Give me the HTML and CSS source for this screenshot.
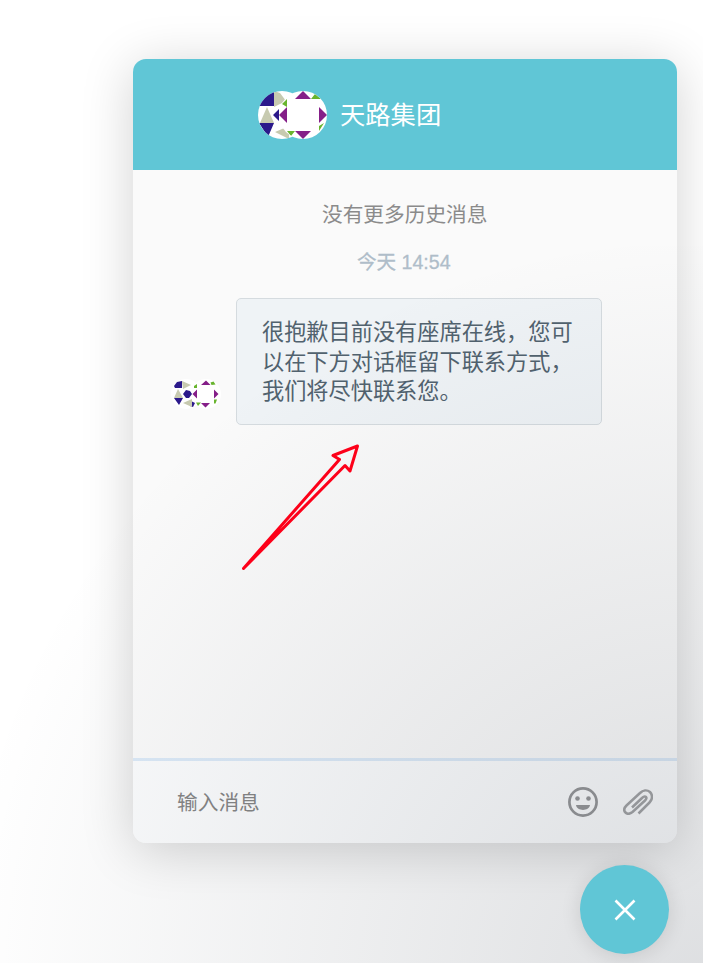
FILE: index.html
```html
<!DOCTYPE html>
<html lang="zh-CN">
<head>
<meta charset="utf-8">
<title>天路集团</title>
<link rel="stylesheet" href="styles.css">
</head>
<body>
<svg class="defs" width="0" height="0" aria-hidden="true">
  <defs>
    <clipPath id="round"><circle cx="24" cy="24" r="24"/></clipPath>
    <g id="face-a" clip-path="url(#round)">
      <path fill="#fff" d="M0 0h48v48H0z"/>
      <path fill="#2b198b" d="M16 0v15L0 15V8zM1 32h15l-6 14zM15 24l6-6v12z"/>
      <path fill="#c7cab0" d="M16 0l6 2 6 8-12 6zM9 16L2 32h14zM17 41l14-6v13z"/>
    </g>
    <g id="face-b" clip-path="url(#round)">
      <path fill="#fff" d="M0 0h48v48H0z"/>
      <path fill="#851f88" d="M16 8l8-8 8 8zM16 40h16l-8 8zM8 16v16l-8-8zM40 16v16l8-8z"/>
      <path fill="#68b42e" d="M32 8l4-5 6 5zM40 40v-5l5-3zM8 16V8L3 13zM8 40h8l-4 5z"/>
    </g>
  </defs>
</svg>
<main class="chat">
  <header class="chat-header">
    <svg class="team" viewBox="0 0 69 48"><use href="#face-a"/><use href="#face-b" x="21"/></svg>
    <h1 class="title">天路集团</h1>
  </header>
  <section class="messages">
    <p class="history">没有更多历史消息</p>
    <p class="date">今天 14:54</p>
    <div class="row">
      <svg class="sender" viewBox="0 0 50 30">
        <circle cx="15" cy="15" r="15" fill="#fff"/>
        <circle cx="35" cy="15" r="15" fill="#fff"/>
        <path fill="#2b198b" d="M3 7l3-4 5-1v7H4zM3 19h9l-4 7zM15 11l4 1 2 3-3 4h-3l-3-4zM20 22l4 2-2 4-3-1z"/>
        <path fill="#c7cab0" d="M11 2l9 4-8 4zM7 10l5 9H3zM12 24l9-4v8z"/>
        <path fill="#851f88" d="M30 6l5-4.500L39.500 6zM30 24h9l-4.500 4.500zM26 10.500v9L21.500 15zM43 10.500v9l4.500-4.500z"/>
        <path fill="#68b42e" d="M39.500 3.500l3-1 2 3-4 .5zM43 20.500h3l-1.500 4H43zM23 7l3-2v4h-3zM25 23.500h5L27 27z"/>
      </svg>
      <div class="bubble">很抱歉目前没有座席在线，您可以在下方对话框留下联系方式，我们将尽快联系您。</div>
    </div>
  </section>
  <footer class="composer">
    <span class="placeholder">输入消息</span>
    <svg class="emoji" viewBox="0 0 30 30"><circle cx="15" cy="15" r="13.6"/><circle class="solid" cx="9.5" cy="11.5" r="2.3"/><circle class="solid" cx="20.5" cy="11.5" r="2.3"/><path class="solid" d="M8 18h14c-1 6.500-13 6.500-14 0z"/></svg>
    <svg class="clip" viewBox="0 0 30 26"><path d="M15.500 24.500L26.500 13.500C30 10 29.500 5.500 27 3c-3-2.500-7-2-10 1L3.500 16.500C.5 19.500 1 22 2.500 23.500c2 2 4.500 1.500 7-.5L22 11.500c2-2 1.500-3 1-3.500-1-1-2-1-4 1L9 18.500"/></svg>
  </footer>
</main>
<button class="launcher" aria-label="关闭"><svg viewBox="0 0 22 22"><path d="M1.500 1.500l19 19M20.500 1.500l-19 19"/></svg></button>
<div class="shade"></div>
<svg class="arrow" viewBox="0 0 140 145"><path d="M13.500 133.500L109.500 24.500 103 20.500 127.500 11 120 36 115 30.500z"/></svg>
</body>
</html>
```
FILE: styles.css
```css
* { box-sizing: border-box; }
body {
  margin: 0;
  width: 703px;
  height: 963px;
  position: relative;
  overflow: hidden;
  background: #fff;
  padding: 59px 0 0 133px;
  font-family: "Liberation Sans", "Noto Sans CJK SC", sans-serif;
}
p, h1 { margin: 0; font-weight: 400; }
.defs { position: absolute; }
.chat {
  width: 543.5px;
  height: 784px;
  display: flex;
  flex-direction: column;
  border-radius: 13px;
  overflow: hidden;
  background: #fafafa;
  box-shadow: 0 7px 52px rgba(0, 0, 0, .18);
}
.chat-header {
  height: 111px;
  flex: none;
  display: flex;
  align-items: center;
  padding-left: 125px;
  background: #60c6d6;
  color: #fff;
}
.team { width: 69px; height: 48px; }
.title { margin-left: 13px; font-size: 25.3px; line-height: 36px; }
.messages { flex: 1; display: flex; flex-direction: column; padding-top: 30px; }
.history { text-align: center; font-size: 20.7px; line-height: 30px; color: #8b8b8b; }
.date {
  margin-top: 18px;
  padding-right: 2px;
  text-align: center;
  font-size: 19.6px;
  line-height: 28px;
  color: #afbdc9;
  -webkit-text-stroke: .3px #afbdc9;
}
.row { display: flex; align-items: flex-end; margin-top: 22px; padding-left: 37.500px; }
.sender { width: 50px; height: 30px; margin-bottom: 16px; }
.bubble {
  width: 366px;
  height: 127px;
  margin-left: 15.500px;
  padding: 19px 24px 0 25px;
  border: 1px solid #d5dbdf;
  border-radius: 5px;
  background: #eff3f6;
  font-size: 22.2px;
  line-height: 29.500px;
  color: #51626e;
}
.composer {
  height: 85px;
  flex: none;
  display: flex;
  align-items: center;
  padding: 0 24px 0 44px;
  border-top: 3px solid #dbe9f7;
  background: #fbfcfd;
}
.placeholder { flex: 1; margin-top: -2px; font-size: 20.7px; color: #858585; }
.emoji { width: 30px; height: 30px; fill: none; stroke: #969799; stroke-width: 2.7; }
.emoji .solid { fill: #969799; stroke: none; }
.clip { width: 30px; height: 26px; margin-left: 25px; fill: none; stroke: #a3a4a6; stroke-width: 2.5; }
.launcher {
  position: absolute;
  left: 580px;
  top: 865px;
  z-index: 2;
  width: 89px;
  height: 89px;
  padding: 0;
  display: grid;
  place-items: center;
  border: 0;
  border-radius: 50%;
  background: #60c6d6;
  box-shadow: 0 2px 20px rgba(0, 0, 0, .12);
}
.launcher svg { width: 22px; height: 22px; fill: none; stroke: #fff; stroke-width: 2.6; }
.shade {
  position: absolute;
  right: -3px;
  bottom: -20px;
  width: 737px;
  height: 737px;
  pointer-events: none;
  background: radial-gradient(ellipse at bottom right, rgba(29, 39, 54, .15) 0, rgba(29, 39, 54, 0) 72%);
}
.arrow {
  position: absolute;
  left: 230px;
  top: 435px;
  z-index: 3;
  width: 140px;
  height: 145px;
  fill: none;
  stroke: #fd0019;
  stroke-width: 3;
  stroke-linejoin: round;
}
```
